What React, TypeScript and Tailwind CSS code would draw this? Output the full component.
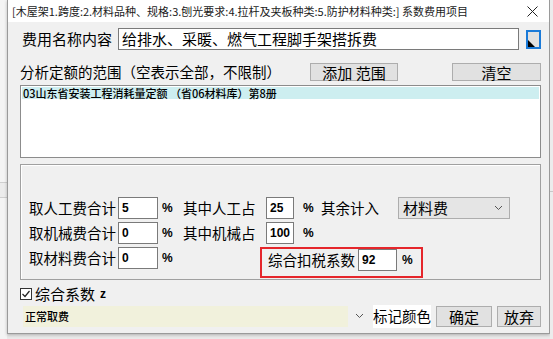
const inputBox = "bg-white border border-[#7a7a7a] flex items-center";
const numText = "font-['Liberation_Sans',sans-serif] font-bold text-[12px] pl-[3px]";
const btn = "bg-[#e1e1e1] border border-[#adadad] flex items-center justify-center text-[15px] leading-none";

function Chevron() {
  return (
    <svg width="9" height="6" viewBox="0 0 9 6" className="shrink-0">
      <polyline points="1,1 4.5,4.5 8,1" fill="none" stroke="#555" strokeWidth="1" />
    </svg>
  );
}

function Pct({ w }: { w: string }) {
  return <span className={`${w} font-['Liberation_Sans',sans-serif] font-bold text-[12px]`}>%</span>;
}

export default function App() {
  return (
    <div className="w-[553px] h-[339px] flex bg-[#e9e9e9] overflow-hidden font-['Noto_Sans_CJK_SC',sans-serif] text-black">
      {/* window behind, left edge */}
      <div className="w-[7px] shrink-0 flex flex-col bg-[#f4f4f4]">
        <div className="h-[183px] border-b border-[#cfcfcf]" />
        <div className="h-[15px] border-b border-[#cfcfcf] bg-[#ececec]" />
      </div>

      <div className="w-[543px] h-[334px] shrink-0 flex flex-col bg-[#f0f0f0] border-x border-b border-[#9a9a9a] shadow-[0_1px_3px_rgba(0,0,0,0.25)]">
        <div className="h-[22px] bg-white flex items-center pl-[4px] pr-[11px]">
          <span className="text-[11px] text-[#1a1a1a] whitespace-nowrap">
            [木屋架1.跨度:2.材料品种、规格:3.刨光要求:4.拉杆及夹板种类:5.防护材料种类:] 系数费用项目
          </span>
          <svg width="11" height="11" viewBox="0 0 11 11" className="ml-auto">
            <path d="M0.5 0.5 L10.5 10.5 M10.5 0.5 L0.5 10.5" stroke="#222" strokeWidth="1" />
          </svg>
        </div>

        <div className="flex flex-col pl-[12px] pr-[8px]">
          <div className="mt-[6px] h-[22px] flex items-center">
            <span className="w-[98px] pl-[2px] text-[15px]">费用名称内容</span>
            <div className={`${inputBox} w-[401px] h-[22px] pl-[3px] text-[15px]`}>给排水、采暖、燃气工程脚手架搭拆费</div>
            <div className="ml-[7px] w-[15px] h-[19px] border-2 border-[#1a7ad8] bg-[#e1e1e1] flex items-end">
              <svg width="7" height="7" viewBox="0 0 7 7">
                <polygon points="0,0 0,7 7,7" fill="#000" />
              </svg>
            </div>
          </div>

          <div className="mt-[13px] h-[18px] flex items-center">
            <span className="w-[290px] text-[14.5px] whitespace-nowrap">分析定额的范围（空表示全部，不限制）</span>
            <div className={`${btn} w-[88px] h-[18px]`}>添加 范围</div>
            <div className={`${btn} ml-[54px] w-[89px] h-[18px]`}>清空</div>
          </div>

          <div className="mt-[4px] h-[73px] border border-[#8c8c8c] bg-white p-[1px]">
            <div className="h-[12px] bg-[#cdeef0] text-[11px] leading-[12px] pl-[1px] font-medium whitespace-nowrap">
              03山东省安装工程消耗量定额 （省06材料库）第8册
            </div>
          </div>

          <div className="mt-[6px] h-[116px] border border-[#a0a0a0] shadow-[inset_1px_1px_0_#fff] pt-[32px] pl-[8px] flex flex-col gap-[3px]">
            <div className="h-[22px] flex items-center text-[14.5px]">
              <span className="w-[89px]">取人工费合计</span>
              <div className={`${inputBox} w-[40px] h-[22px] ${numText}`}>5</div>
              <Pct w="w-[25px] pl-[4px]" />
              <span className="w-[83px]">其中人工占</span>
              <div className={`${inputBox} w-[28px] h-[22px] ${numText}`}>25</div>
              <Pct w="w-[27px] pl-[9px]" />
              <span className="w-[77px]">其余计入</span>
              <div className="w-[112px] h-[22px] bg-[#e5e5e5] border border-[#adadad] flex items-center pl-[4px] pr-[6px] justify-between">
                <span className="text-[15px]">材料费</span>
                <Chevron />
              </div>
            </div>
            <div className="h-[22px] flex items-center text-[14.5px]">
              <span className="w-[89px]">取机械费合计</span>
              <div className={`${inputBox} w-[40px] h-[22px] ${numText}`}>0</div>
              <Pct w="w-[25px] pl-[4px]" />
              <span className="w-[83px]">其中机械占</span>
              <div className={`${inputBox} w-[28px] h-[22px] ${numText} pl-[1px]`}>100</div>
              <Pct w="w-[27px] pl-[9px]" />
            </div>
            <div className="flex items-start text-[14.5px]">
              <div className="h-[22px] flex items-center">
                <span className="w-[89px]">取材料费合计</span>
                <div className={`${inputBox} w-[40px] h-[22px] ${numText}`}>0</div>
                <Pct w="w-[25px] pl-[4px]" />
              </div>
              <div className="ml-[77px] w-[163px] h-[31px] border-2 border-[#e5262b] flex items-start">
                <div className="h-[22px] flex items-center">
                  <span className="ml-[6px] w-[90px] whitespace-nowrap">综合扣税系数</span>
                  <div className={`${inputBox} w-[39px] h-[22px] ${numText}`}>92</div>
                  <Pct w="pl-[5px]" />
                </div>
              </div>
            </div>
          </div>

          <div className="mt-[6px] h-[16px] flex items-center">
            <div className="w-[12px] h-[12px] border border-[#333] bg-white flex items-center justify-center">
              <svg width="10" height="10" viewBox="0 0 10 10">
                <polyline points="1.5,5 4,7.5 8.5,2" fill="none" stroke="#222" strokeWidth="1.2" />
              </svg>
            </div>
            <span className="ml-[3px] text-[15px]">综合系数</span>
            <span className="ml-[5px] font-['Liberation_Sans',sans-serif] font-bold text-[12px]">z</span>
          </div>

          <div className="mt-[2px] h-[24px] flex items-center">
            <div className="ml-[3px] w-[325px] h-[21px] bg-[#f1f1dc] flex items-center pl-[2px] text-[11px] font-medium">正常取费</div>
            <div className="w-[22px] flex justify-center">
              <Chevron />
            </div>
            <div className="ml-[3px] w-[58px] h-[23px] bg-white flex items-center text-[14.5px] whitespace-nowrap overflow-hidden">标记颜色</div>
            <div className={`${btn} ml-[5px] w-[56px] h-[21px]`}>确定</div>
            <div className={`${btn} ml-[5px] w-[44px] h-[21px]`}>放弃</div>
          </div>
        </div>
      </div>

      <div className="flex-1 flex flex-col bg-[#ececec]">
        <div className="h-[192px] border-b border-[#c8c8c8]" />
      </div>
    </div>
  );
}
